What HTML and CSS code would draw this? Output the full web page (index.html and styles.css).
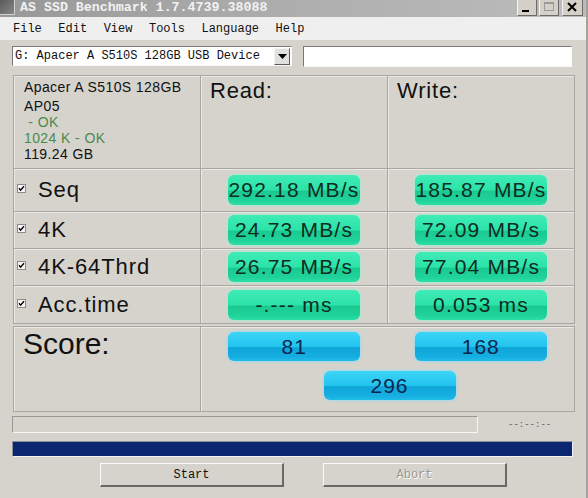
FILE: index.html
```html
<!DOCTYPE html>
<html>
<head>
<meta charset="utf-8">
<title>AS SSD Benchmark</title>
<link rel="stylesheet" href="styles.css">
</head>
<body>
<div class="window">
  <div class="titlebar">
    <div class="title-left">
      <span class="app-icon"></span>
      <span class="title">AS SSD Benchmark 1.7.4739.38088</span>
    </div>
    <div class="win-btns">
      <span class="wb wb-min"><svg width="18" height="15" viewBox="0 0 18 15"><rect x="4" y="10" width="7" height="2" fill="#000"/></svg></span>
      <span class="wb wb-max"><svg width="18" height="15" viewBox="0 0 18 15"><rect x="4.5" y="2.5" width="9" height="8" fill="none" stroke="#9a9a9a"/><rect x="4.5" y="2.5" width="9" height="1.5" fill="#9a9a9a"/></svg></span>
      <span class="wb wb-close"><svg width="19" height="15" viewBox="0 0 19 15"><path d="M5 3 L13 11 M13 3 L5 11" stroke="#000" stroke-width="2"/></svg></span>
    </div>
  </div>
  <div class="menubar">
    <span>File</span><span>Edit</span><span>View</span><span>Tools</span><span>Language</span><span>Help</span>
  </div>
  <div class="toolbar">
    <div class="select">
      <span class="select-text">G: Apacer A S510S 128GB USB Device</span>
      <span class="select-btn"><svg width="9" height="5" viewBox="0 0 9 5"><path d="M0 0 H9 L4.5 5 Z" fill="#000"/></svg></span>
    </div>
    <div class="textbox"></div>
  </div>

  <div class="results">
    <div class="cell info">
      <div class="info-name">Apacer A S510S 128GB</div>
      <div>AP05</div>
      <div class="ok">&nbsp;- OK</div>
      <div class="ok">1024 K - OK</div>
      <div>119.24 GB</div>
    </div>
    <div class="cell head">Read:</div>
    <div class="cell head">Write:</div>

    <div class="cell label"><span class="chk"><svg width="9" height="9" viewBox="0 0 9 9"><rect x="0.5" y="0.5" width="8" height="8" fill="#f6f6f6" stroke="#8a8a8a"/><path d="M2 4.2 L3.6 6.2 L7 2.2" fill="none" stroke="#000" stroke-width="1.4"/></svg></span>Seq</div>
    <div class="cell val"><span class="gbox">292.18 MB/s</span></div>
    <div class="cell val"><span class="gbox">185.87 MB/s</span></div>

    <div class="cell label"><span class="chk"><svg width="9" height="9" viewBox="0 0 9 9"><rect x="0.5" y="0.5" width="8" height="8" fill="#f6f6f6" stroke="#8a8a8a"/><path d="M2 4.2 L3.6 6.2 L7 2.2" fill="none" stroke="#000" stroke-width="1.4"/></svg></span>4K</div>
    <div class="cell val"><span class="gbox">24.73 MB/s</span></div>
    <div class="cell val"><span class="gbox">72.09 MB/s</span></div>

    <div class="cell label"><span class="chk"><svg width="9" height="9" viewBox="0 0 9 9"><rect x="0.5" y="0.5" width="8" height="8" fill="#f6f6f6" stroke="#8a8a8a"/><path d="M2 4.2 L3.6 6.2 L7 2.2" fill="none" stroke="#000" stroke-width="1.4"/></svg></span>4K-64Thrd</div>
    <div class="cell val"><span class="gbox">26.75 MB/s</span></div>
    <div class="cell val"><span class="gbox">77.04 MB/s</span></div>

    <div class="cell label"><span class="chk"><svg width="9" height="9" viewBox="0 0 9 9"><rect x="0.5" y="0.5" width="8" height="8" fill="#f6f6f6" stroke="#8a8a8a"/><path d="M2 4.2 L3.6 6.2 L7 2.2" fill="none" stroke="#000" stroke-width="1.4"/></svg></span>Acc.time</div>
    <div class="cell val"><span class="gbox">-.--- ms</span></div>
    <div class="cell val"><span class="gbox">0.053 ms</span></div>
  </div>

  <div class="score">
    <div class="cell score-label">Score:</div>
    <div class="cell score-area">
      <span class="bbox">81</span>
      <span class="bbox">168</span>
      <span class="bbox total">296</span>
    </div>
  </div>

  <div class="status">
    <div class="statusbox"></div>
    <span class="time">--:--:--</span>
  </div>
  <div class="progress"></div>
  <div class="buttons">
    <button class="btn">Start</button>
    <button class="btn" disabled>Abort</button>
  </div>
</div>
</body>
</html>
```
FILE: styles.css
```css
html, body {
  margin: 0;
  padding: 0;
}
body {
  width: 588px;
  height: 498px;
  overflow: hidden;
  background: #d6d3cd;
  font-family: "Liberation Sans", Arial, sans-serif;
}
.window {
  width: 586px;
  height: 498px;
  border-right: 2px solid #a4a29e;
  background: #d6d3cd;
}

/* title bar */
.titlebar {
  height: 17px;
  display: flex;
  justify-content: space-between;
  background: linear-gradient(to right, #989898, #aeaeae 50%, #bcbcbc);
}
.title-left {
  display: flex;
  align-items: flex-start;
}
.app-icon {
  width: 14px;
  height: 14px;
  background: linear-gradient(135deg, #5a5a5a, #888);
  border-right: 1px solid #d0d0d0;
  border-bottom: 1px solid #d0d0d0;
}
.title {
  margin-left: 5px;
  font-family: "Liberation Mono", monospace;
  font-size: 13.3px;
  line-height: 16px;
  color: #f2f2f2;
  font-weight: bold;
}
.win-btns {
  display: flex;
  gap: 2px;
  padding-right: 3px;
}
.wb {
  display: flex;
  height: 15px;
  background: #d4d0c8;
  border-right: 1px solid #6a6a6a;
  border-bottom: 1px solid #6a6a6a;
  border-left: 1px solid #f4f4f4;
}
.wb-close { margin-left: 1px; }

/* menu */
.menubar {
  height: 23px;
  display: flex;
  align-items: center;
  gap: 16.5px;
  padding-left: 13px;
  background: #efefef;
  font-family: "Liberation Mono", monospace;
  font-size: 12px;
  color: #111;
}

/* toolbar */
.toolbar {
  display: flex;
  align-items: flex-start;
  padding: 6px 0 0 12px;
  height: 21px;
}
.select {
  width: 278px;
  height: 18px;
  display: flex;
  justify-content: space-between;
  align-items: center;
  background: #fff;
  border-top: 1px solid #7a7a7a;
  border-left: 1px solid #7a7a7a;
  border-bottom: 1px solid #f8f8f8;
  border-right: 1px solid #f8f8f8;
}
.select-text {
  padding-left: 2px;
  font-family: "Liberation Mono", monospace;
  font-size: 12px;
  color: #111;
  white-space: nowrap;
}
.select-btn {
  width: 16px;
  height: 17px;
  display: flex;
  align-items: center;
  justify-content: center;
  background: #e2e0dc;
  border-top: 1px solid #f4f4f4;
  border-left: 1px solid #f4f4f4;
  border-right: 1px solid #5a5a5a;
  border-bottom: 1px solid #5a5a5a;
  box-sizing: border-box;
  margin-right: 1px;
}
.textbox {
  margin-left: 11px;
  width: 267px;
  height: 19px;
  background: #fff;
  border-top: 1px solid #7a7a7a;
  border-left: 1px solid #7a7a7a;
  border-bottom: 1px solid #f8f8f8;
  border-right: 1px solid #f8f8f8;
}

/* results grid */
.results {
  margin: 8px 0 0 13px;
  display: grid;
  grid-template-columns: 186px 186px 186px;
  grid-template-rows: 92px 42px 36px 36px 37px;
  gap: 1px;
  width: 560px;
  background: #aaa7a2;
  border: 1px solid #aaa7a2;
}
.cell {
  background: #d6d3cd;
  box-shadow: inset 1px 1px 0 #ebe9e5;
}
.info {
  padding: 3px 0 0 10px;
  font-size: 14px;
  line-height: 16px;
  letter-spacing: 0.4px;
  color: #111;
}
.info-name { margin-bottom: 3px; }
.ok { color: #4d8a4d; }
.head {
  padding: 2px 0 0 9px;
  font-size: 22px;
  letter-spacing: 0.8px;
  color: #111;
}
.label {
  display: flex;
  align-items: center;
  padding-left: 3px;
  font-size: 22px;
  letter-spacing: 0.9px;
  color: #111;
}
.chk {
  display: flex;
  width: 9px;
  height: 9px;
  margin: 0 12px 3px 0;
}
.val {
  display: flex;
  align-items: center;
  justify-content: center;
}
.gbox {
  width: 132px;
  height: 30px;
  display: flex;
  align-items: center;
  justify-content: center;
  border-radius: 6px;
  background: linear-gradient(to bottom, #40ebb6 0%, #2ce3a8 50%, #1ac990 54%, #20d39a 85%, #2adfa5 100%);
  box-shadow: 0 0 2px 1px rgba(160, 240, 212, 0.8);
  font-size: 21px;
  letter-spacing: 1.2px;
  color: #0e2c22;
  white-space: nowrap;
}

/* score */
.score {
  margin: 2px 0 0 13px;
  display: grid;
  grid-template-columns: 186px 373px;
  grid-template-rows: 84px;
  gap: 1px;
  width: 560px;
  background: #aaa7a2;
  border: 1px solid #aaa7a2;
}
.score-label {
  padding-left: 9px;
  font-size: 30px;
  line-height: 34px;
  color: #111;
}
.score-area {
  display: grid;
  grid-template-columns: 1fr 1fr;
  row-gap: 10px;
  padding-top: 5px;
  align-content: start;
  justify-items: center;
}
.bbox {
  width: 132px;
  height: 29px;
  display: flex;
  align-items: center;
  justify-content: center;
  border-radius: 6px;
  background: linear-gradient(to bottom, #3cd5f7 0%, #22c4ee 50%, #10a5d9 54%, #16aee1 85%, #20bde9 100%);
  box-shadow: 0 0 2px 1px rgba(150, 220, 245, 0.8);
  font-size: 21px;
  letter-spacing: 1px;
  color: #0b2550;
}
.bbox.total {
  grid-column: 1 / 3;
  margin-left: 4px;
}

/* status */
.status {
  margin: 4px 0 0 12px;
  display: flex;
  align-items: center;
}
.statusbox {
  width: 464px;
  height: 15px;
  border-top: 1px solid #9a9894;
  border-left: 1px solid #9a9894;
  border-bottom: 1px solid #f6f6f4;
  border-right: 1px solid #f6f6f4;
}
.time {
  margin-left: 30px;
  font-family: "Liberation Mono", monospace;
  font-size: 9px;
  color: #555;
}
.progress {
  margin: 8px 0 0 12px;
  width: 559px;
  height: 14px;
  background: #0b2670;
  border-top: 1px solid #8a8f9a;
  border-left: 1px solid #8a8f9a;
  border-bottom: 1px solid #f2f2f2;
  border-right: 1px solid #f2f2f2;
}

/* buttons */
.buttons {
  margin: 6px 0 0 100px;
  display: flex;
  gap: 39px;
}
.btn {
  width: 184px;
  height: 24px;
  padding: 0;
  background: #d6d3cd;
  border-top: 1px solid #fafafa;
  border-left: 1px solid #fafafa;
  border-right: 2px solid #6a6864;
  border-bottom: 2px solid #6a6864;
  font-family: "Liberation Mono", monospace;
  font-size: 12px;
  color: #111;
}
.btn:disabled {
  color: #9a9894;
  text-shadow: 1px 1px 0 #fff;
}
```
